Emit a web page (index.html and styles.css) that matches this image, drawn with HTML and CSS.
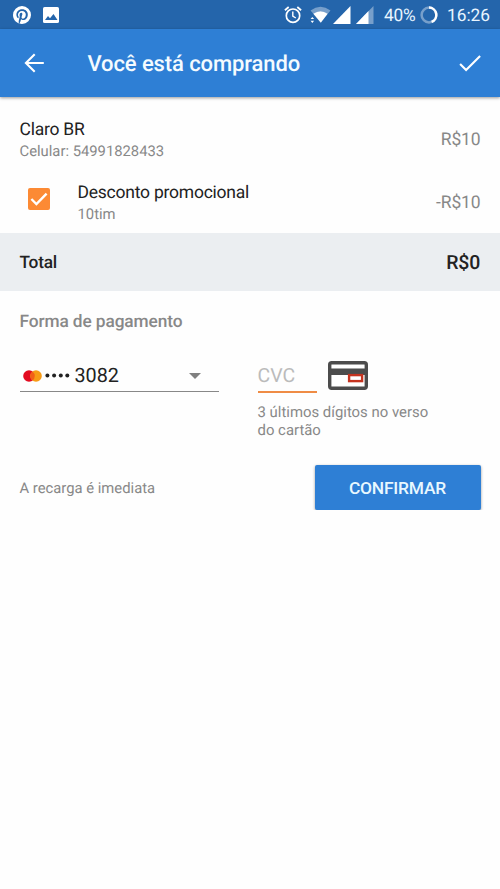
FILE: index.html
```html
<!DOCTYPE html>
<html lang="pt-BR">
<head>
<meta charset="utf-8">
<title>Você está comprando</title>
<link rel="stylesheet" href="styles.css">
</head>
<body>
<div class="status">
  <svg class="pin" width="18" height="18" viewBox="0 0 24 24"><path fill="#fff" d="M9.04 21.54c.96.29 1.93.46 2.96.46a10 10 0 1 0-10-10c0 4.25 2.67 7.9 6.44 9.34-.09-.78-.18-2.07 0-2.96l1.15-4.94s-.29-.58-.29-1.5c0-1.38.86-2.41 1.84-2.41.86 0 1.26.63 1.26 1.44 0 .86-.57 2.09-.86 3.27-.17.98.52 1.84 1.52 1.84 1.78 0 3.16-1.9 3.16-4.58 0-2.4-1.72-4.04-4.19-4.04-2.82 0-4.48 2.1-4.48 4.31 0 .86.28 1.73.74 2.3.09.06.09.14.06.29l-.29 1.09c0 .17-.11.23-.28.11-1.28-.56-2.02-2.38-2.02-3.85 0-3.16 2.24-6.03 6.56-6.03 3.44 0 6.12 2.47 6.12 5.75 0 3.44-2.13 6.2-5.18 6.2-.97 0-1.92-.52-2.26-1.13l-.67 2.37c-.23.86-.86 2.01-1.29 2.7z" transform="translate(-2.4 -2.4) scale(1.2)"/></svg>
  <svg class="picture" width="16" height="16" viewBox="0 0 16 16"><rect width="16" height="16" rx="1.6" fill="#fff"/><path fill="#2465ab" d="M2 13l3-4 2 2.3L10.5 7l4 6z"/></svg>
  <span class="spacer"></span>
  <svg class="alarm" width="18" height="18" viewBox="0 0 18 18" fill="none" stroke="#fff"><circle cx="9" cy="9.7" r="6.7" stroke-width="1.7"/><path stroke-width="1.8" d="M.9 4.2L4.7 1M17.1 4.2L13.3 1"/><path stroke-width="1.4" d="M8.8 5.6v4.6l3 1.8"/></svg>
  <svg class="wifi" width="21" height="18" viewBox="0 0 21 18"><path fill="#fff" fill-opacity=".38" d="M.5 4.5Q10.5-2.8 20.5 4.5L17.6 8.1Q10.5 2.8 3.6 8.1z"/><path fill="#fff" d="M3.3 7.7Q10.5 2.7 17.7 7.7L10.8 16.7z"/><path fill="#fff" d="M.6 13.1L2.3 11l1.8 2.1zM.6 14.7h3.5l-1.8 2.2z"/></svg>
  <svg class="signal" width="18" height="18" viewBox="0 0 18 18"><path fill="#fff" d="M0 18L17.5 0v18z"/></svg>
  <svg class="signal-low" width="18" height="18" viewBox="0 0 18 18"><path fill="#fff" fill-opacity=".38" d="M0 18L17.5 0v18z"/><path fill="#fff" d="M0 18L12.5 5V18z"/></svg>
  <span class="battery">40%</span>
  <svg class="ring" width="18" height="18" viewBox="0 0 18 18" fill="none" stroke="#fff" stroke-width="2.5"><circle cx="9" cy="9" r="7.4" stroke-opacity=".38"/><path d="M9 1.6A7.4 7.4 0 0 1 11.6 15.9"/></svg>
  <span class="clock">16:26</span>
</div>
<header class="appbar">
  <svg width="20" height="20" viewBox="0 0 20 20" fill="none" stroke="#fff" stroke-width="2.1"><path d="M19.8 10H2M10.7 1.2L1.9 10l8.8 8.8"/></svg>
  <h1>Você está comprando</h1>
  <svg class="done" width="22" height="18" viewBox="0 0 22 18" fill="none" stroke="#fff" stroke-width="2.1"><path d="M1.1 9.9l6 6.1L21.1 1.9"/></svg>
</header>
<main>
  <div class="row first">
    <div><div class="name">Claro BR</div><div class="sub phone">Celular: 54991828433</div></div>
    <span class="price">R$10</span>
  </div>
  <div class="row discount">
    <svg class="check" width="22" height="22" viewBox="0 0 22 22"><rect width="22" height="22" rx="2" fill="#fc8a34"/><path d="M3.4 11l5 5L18.6 5.7" fill="none" stroke="#fff" stroke-width="2.4"/></svg>
    <div class="grow"><div class="name promo">Desconto promocional</div><div class="sub code">10tim</div></div>
    <span class="price">-R$10</span>
  </div>
  <div class="total"><span class="label">Total</span><span class="sum">R$0</span></div>
  <h2>Forma de pagamento</h2>
  <div class="payment">
    <div class="select">
      <svg width="19" height="12" viewBox="0 0 19 12"><circle cx="6" cy="6" r="5.8" fill="#e30b20"/><circle cx="13" cy="6" r="5.8" fill="#f79b15"/><path fill="#f26018" d="M9.5 1.4a5.8 5.8 0 0 1 0 9.2a5.8 5.8 0 0 1 0-9.2z"/></svg>
      <svg class="dots" width="25" height="5" viewBox="0 0 25 5" fill="#222"><circle cx="2.4" cy="2.5" r="2"/><circle cx="9.1" cy="2.5" r="2"/><circle cx="15.8" cy="2.5" r="2"/><circle cx="22.3" cy="2.5" r="2"/></svg>
      <span class="digits">3082</span>
      <svg class="arrow" width="12" height="6" viewBox="0 0 12 6"><path fill="#808080" d="M0 0h12L6 6z"/></svg>
    </div>
    <div class="security">
      <div class="entry">
        <div class="cvc">CVC</div>
        <svg width="40" height="29" viewBox="0 0 40 29"><rect x="1.7" y="1.7" width="36.6" height="25.6" rx="2" fill="#fff" stroke="#4c4c4c" stroke-width="3.4"/><path fill="#4c4c4c" d="M2 7.5h36V14H2z"/><rect x="21.1" y="14.1" width="13" height="6" fill="#fff" stroke="#c5331f" stroke-width="2.4"/></svg>
      </div>
      <p>3 últimos dígitos no verso<br>do cartão</p>
    </div>
  </div>
  <div class="footer"><span class="note">A recarga é imediata</span><button>CONFIRMAR</button></div>
</main>
</body>
</html>
```
FILE: styles.css
```css
* { box-sizing: border-box; }
body { margin: 0; background: #fefefe; color: #222; font-family: Roboto, sans-serif; text-rendering: geometricPrecision; }
svg { display: block; flex: none; }
h1, h2, p { margin: 0; }
.status { display: flex; align-items: center; height: 29px; padding: 0 10px 0 12.5px; background: #2465ab; color: #e8f5ff; font-size: 17.3px; white-space: nowrap; }
.picture { margin-left: 12.5px; }
.spacer { flex: 1; }
.wifi { margin-left: 8px; }
.signal { margin-left: 2px; }
.signal-low { margin-left: 5px; }
.battery { width: 32px; margin: 3px 0 0 10px; letter-spacing: -.15px; }
.ring { margin-left: 4px; }
.clock { width: 43px; margin: 3px 0 0 9px; }
.appbar { position: relative; display: flex; align-items: center; height: 68px; padding: 0 19px 0 24px; background: #2e7fd5; color: #f4fbff; box-shadow: 0 1px 3px rgba(0,0,0,.4); }
h1 { flex: 1; margin: 4px 0 0 43.5px; font-size: 22px; font-weight: 500; line-height: 26px; letter-spacing: -.1px; }
.row { display: flex; align-items: center; padding: 0 19.5px; }
.first { justify-content: space-between; height: 63px; margin-top: 11px; }
.discount { height: 62px; }
.name { padding-top: 2px; font-size: 17.5px; line-height: 21px; letter-spacing: -.23px; }
.sub { font-size: 14.8px; line-height: 21px; color: #888; }
.grow { flex: 1; padding-top: 2px; }
.price { font-size: 17.5px; letter-spacing: -.15px; color: #888; }
.discount .price { padding-top: 2px; }
.check { margin: 0 28px 6px 8px; }
.total { display: flex; align-items: center; justify-content: space-between; height: 58px; padding: 0 20px 0 19.5px; background: #ebeef1; font-size: 17.3px; font-weight: 500; letter-spacing: -.25px; }
.label { padding-top: 2px; }
.sum { font-size: 19.5px; padding-top: 1px; }
h2 { padding: 21px 19.5px 0; font-size: 17.3px; line-height: 20px; font-weight: 500; letter-spacing: -.1px; color: #888; }
.payment { display: flex; gap: 39px; padding: 26px 19.5px 0; }
.select { display: flex; align-items: center; width: 199px; height: 34px; padding: 2px 18px 0 3px; border-bottom: 1px solid #888; }
.dots { margin-left: 3px; }
.digits { margin-left: 5px; font-size: 19.8px; }
.arrow { margin-left: auto; }
.entry { display: flex; gap: 11.5px; height: 35px; }
.entry svg { margin-top: 3px; }
.cvc { width: 59px; height: 35px; padding-top: 6px; border-bottom: 2px solid #ef8c45; font-size: 19.5px; line-height: 24px; color: #bbb; }
p { margin-top: 10px; font-size: 14.9px; line-height: 18px; color: #888; white-space: nowrap; }
.footer { display: flex; align-items: center; justify-content: space-between; margin-top: 26px; padding: 0 19.5px; font-size: 14.8px; color: #888; }
button { width: 166px; height: 45px; padding: 0; border: 0; border-radius: 2px; background: #2e7fd5; color: #e8f8ff; box-shadow: 0 1px 3px rgba(0,0,0,.4); font: 500 17.4px Roboto, sans-serif; letter-spacing: -.2px; }
```
